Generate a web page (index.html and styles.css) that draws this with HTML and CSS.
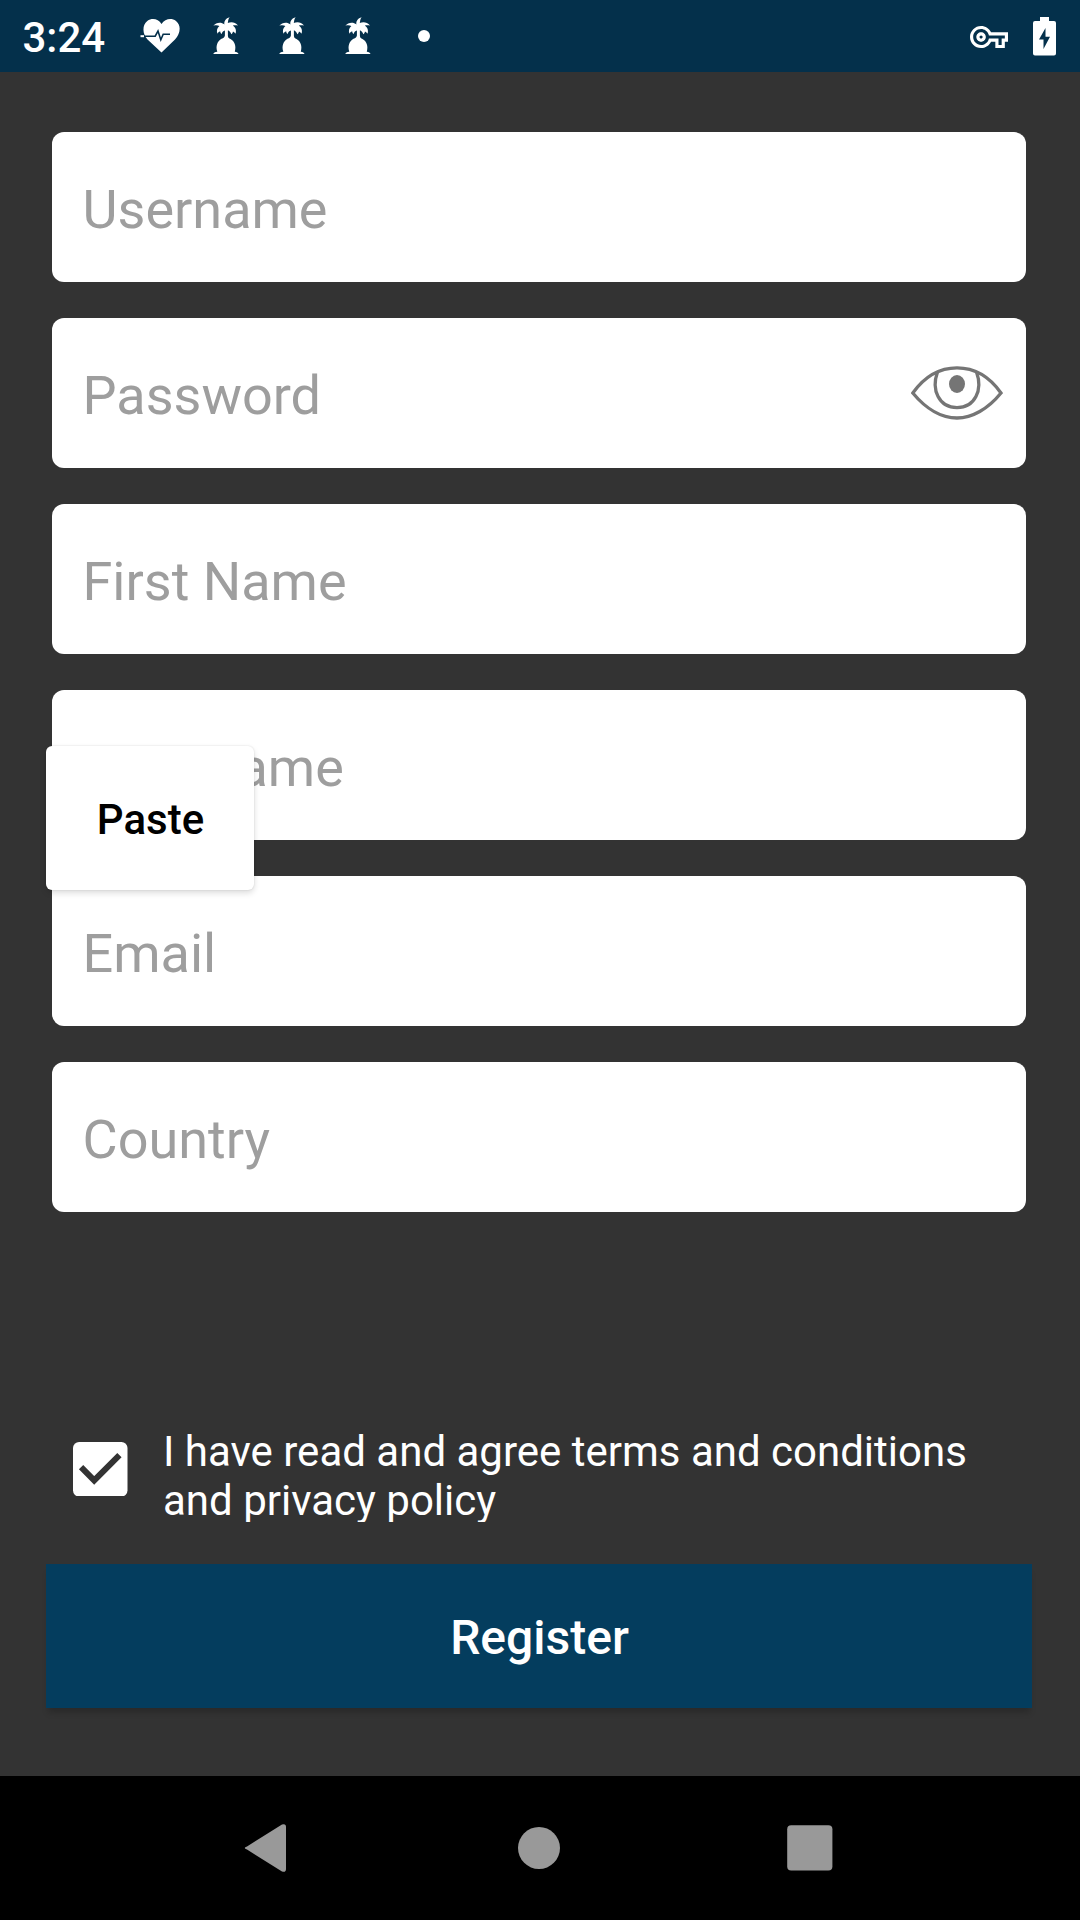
FILE: index.html
```html
<!DOCTYPE html>
<html lang="en">
<head>
<meta charset="utf-8">
<title>Register</title>
<link rel="stylesheet" href="styles.css">
</head>
<body>
<svg class="defs" aria-hidden="true">
  <symbol id="palm" viewBox="0 0 26 38">
    <path d="M11.4 7.5C10.8 4 13 1 16.6 0.2C15 2.3 15.2 4.4 14.8 6C17.5 4.8 22 4.5 25 8.6C23.3 8 21.4 8 19.8 8.6C22.2 10.2 23.7 13 22.6 16.8C21.9 15.7 21 14.8 20 14.4C19.8 15.5 19.3 16.5 18.3 17.2C17.8 15.5 16.8 14 14.9 13.2V19C15.2 21 16 21.400 17.500 22C21.500 24 23.500 29 21.800 34.700C23.800 34.900 25.300 35.600 25.500 37H0.300C0.500 35.600 2 34.900 4.300 34.700C2.400 29 4.500 24 8.500 21.800C10.600 21 11.700 20.200 11.900 18.500V13.600C10 14.200 9.100 15.500 8.700 17C7.600 16.400 7.200 15.200 7.200 14.300C5.800 14.700 5 15.700 4.400 16.800C3.200 13.200 4.300 10.500 6.400 8.900C4.400 8.100 2.200 8.200 0.400 8.700C3 5.300 8.300 4.600 11.400 7.500Z"/>
  </symbol>
</svg>
<header class="status">
  <span class="clock">3:24</span>
  <svg class="heart" viewBox="0 0 40 34">
    <path d="M21.500 33.600L7.500 20.500C2.500 15 1.800 6.500 7.300 2C12-1.300 18.200-.3 21.500 5C25-.3 31.500-1.300 36 2C41.500 6.500 40.500 14.500 35 20.500Z"/>
    <path class="pulse" d="M1.500 17.200H15.200L18 12L20.800 20.800L23.200 15.300H30"/>
    <path class="lead" d="M.5 17.200H4"/>
  </svg>
  <svg class="palm"><use href="#palm"/></svg>
  <svg class="palm"><use href="#palm"/></svg>
  <svg class="palm"><use href="#palm"/></svg>
  <span class="dot"></span>
  <svg class="key" viewBox="0 0 24 24">
    <path d="M22 19h-6v-4h-2.680c-1.140 2.420-3.600 4-6.320 4-3.860 0-7-3.140-7-7s3.140-7 7-7c2.720 0 5.170 1.580 6.320 4H24v6h-2v4zm-4-2h2v-4h2v-2H11.940l-.23-.67C11.010 8.340 9.110 7 7 7c-2.760 0-5 2.240-5 5s2.240 5 5 5c2.110 0 4.010-1.340 4.710-3.330l.23-.67H18v4zM7 15c-1.650 0-3-1.350-3-3s1.350-3 3-3 3 1.350 3 3-1.350 3-3 3zm0-4c-.55 0-1 .45-1 1s.45 1 1 1 1-.45 1-1-.45-1-1-1z"/>
  </svg>
  <svg class="battery" viewBox="0 0 23 39">
    <path d="M7 0H16V4H21Q23 4 23 6V36.500Q23 38.500 21 38.500H2Q0 38.500 0 36.500V6Q0 4 2 4H7ZM12.500 11L6 22.500H10.500V32L17 19.800H12.500Z"/>
  </svg>
</header>
<main class="form">
  <div class="fields">
    <div class="field"><span>Username</span></div>
    <div class="field"><span>Password</span>
      <svg class="eye" viewBox="0 0 92 54">
        <path d="M1.800 27C14 10 30 1.900 46 1.900S78 10 90 27C77 43 61 52 46 52S15 43 1.800 27Z"/>
        <path d="M26.500 6C20 24 28 41.700 46 41.700S72 24 65.500 6"/>
        <ellipse cx="46" cy="18" rx="8" ry="9"/>
      </svg>
    </div>
    <div class="field"><span>First Name</span></div>
    <div class="field"><span>Last Name</span></div>
    <div class="field"><span>Email</span></div>
    <div class="field"><span>Country</span></div>
  </div>
  <div class="paste">Paste</div>
  <div class="agree">
    <svg class="check" viewBox="0 0 54 54"><rect width="54" height="54" rx="6"/><path d="M8 25L21 38L46 13"/></svg>
    <p class="terms">I have read and agree terms and conditions<br>and privacy policy</p>
  </div>
  <button class="register" type="button">Register</button>
</main>
<nav class="nav">
  <svg class="back" viewBox="0 0 48 48"><path d="M4 22.400L39 .5Q43 -.8 43 3V45Q43 48.800 39 47.500L4 25.600Q-.5 24 4 22.400Z"/></svg>
  <svg viewBox="0 0 48 48"><circle cx="24" cy="24" r="21"/></svg>
  <svg viewBox="0 0 48 48"><rect x="1.200" y="1.200" width="45.200" height="45.200" rx="4"/></svg>
</nav>
</body>
</html>
```
FILE: styles.css
```css
* { box-sizing: border-box; }
body {
  margin: 0;
  width: 1080px;
  height: 1920px;
  display: flex;
  flex-direction: column;
  background: #333;
  font-family: Roboto, sans-serif;
  overflow: hidden;
}
.defs { display: none; }
.status {
  height: 72px;
  flex: none;
  display: flex;
  align-items: center;
  background: #04304b;
  color: #fff;
  padding: 0 24px 0 22.5px;
}
.status svg { flex: none; fill: #fff; }
.clock { width: 117.5px; font-size: 42px; font-weight: 500; line-height: 50px; padding-top: 4px; }
.heart { width: 40px; height: 34px; margin-right: 33px; }
.pulse, .lead { fill: none; stroke: #04304b; stroke-width: 1.6; }
.heart .lead { stroke: #fff; stroke-width: 2; }
.palm { width: 26px; height: 38px; margin-right: 40px; }
.dot { width: 12px; height: 12px; border-radius: 50%; background: #fff; margin: 0 auto 0 7px; }
.key { width: 38px; height: 38px; margin: 2px 25px 0 0; }
.battery { width: 23px; height: 39px; fill-rule: evenodd; }
.form {
  position: relative;
  height: 1704px;
  flex: none;
  padding: 60px 48px 0 46px;
  display: flex;
  flex-direction: column;
}
.fields { display: grid; gap: 36px; padding: 0 6px; }
.field {
  height: 150px;
  display: flex;
  align-items: center;
  justify-content: space-between;
  padding: 0 23px 0 30.5px;
  border-radius: 12px;
  background: #fff;
  color: #9e9e9e;
  font-size: 54px;
}
.field span { padding-top: 5px; }
.eye { width: 92px; height: 54px; fill: none; stroke: #757575; stroke-width: 3.3; }
.eye ellipse { fill: #757575; stroke: none; }
.paste {
  position: absolute;
  left: 46px;
  top: 674px;
  width: 208px;
  height: 144px;
  padding-left: 1px;
  line-height: 148px;
  text-align: center;
  font-size: 42px;
  font-weight: 500;
  color: #000;
  background: #fff;
  border-radius: 6px;
  box-shadow: 0 3px 6px rgba(0,0,0,.14), 0 0 2px rgba(0,0,0,.12);
}
.agree { display: flex; margin-top: 215px; padding-left: 27px; }
.check { width: 54.5px; height: 54.5px; margin-top: 14.5px; fill: #fff; }
.check path { fill: none; stroke: #333; stroke-width: 6; }
.terms {
  margin: 0 0 0 35.5px;
  height: 95px;
  overflow: hidden;
  white-space: nowrap;
  color: #fff;
  font-size: 42px;
  line-height: 49px;
}
.register {
  height: 144px;
  margin-top: 42px;
  padding: 4px 0 0 1px;
  border: 0;
  background: #043d5e;
  color: #fff;
  font: 500 48px/58px Roboto, sans-serif;
  box-shadow: 0 7px 6px -2px rgba(0,0,0,.18);
}
.nav {
  height: 144px;
  flex: none;
  display: flex;
  align-items: center;
  justify-content: center;
  gap: 222.5px;
  background: #000;
  padding-right: 2px;
}
.nav svg { width: 48px; height: 48px; fill: #999; }
.nav .back { margin-left: -2px; margin-right: 2px; }
```
